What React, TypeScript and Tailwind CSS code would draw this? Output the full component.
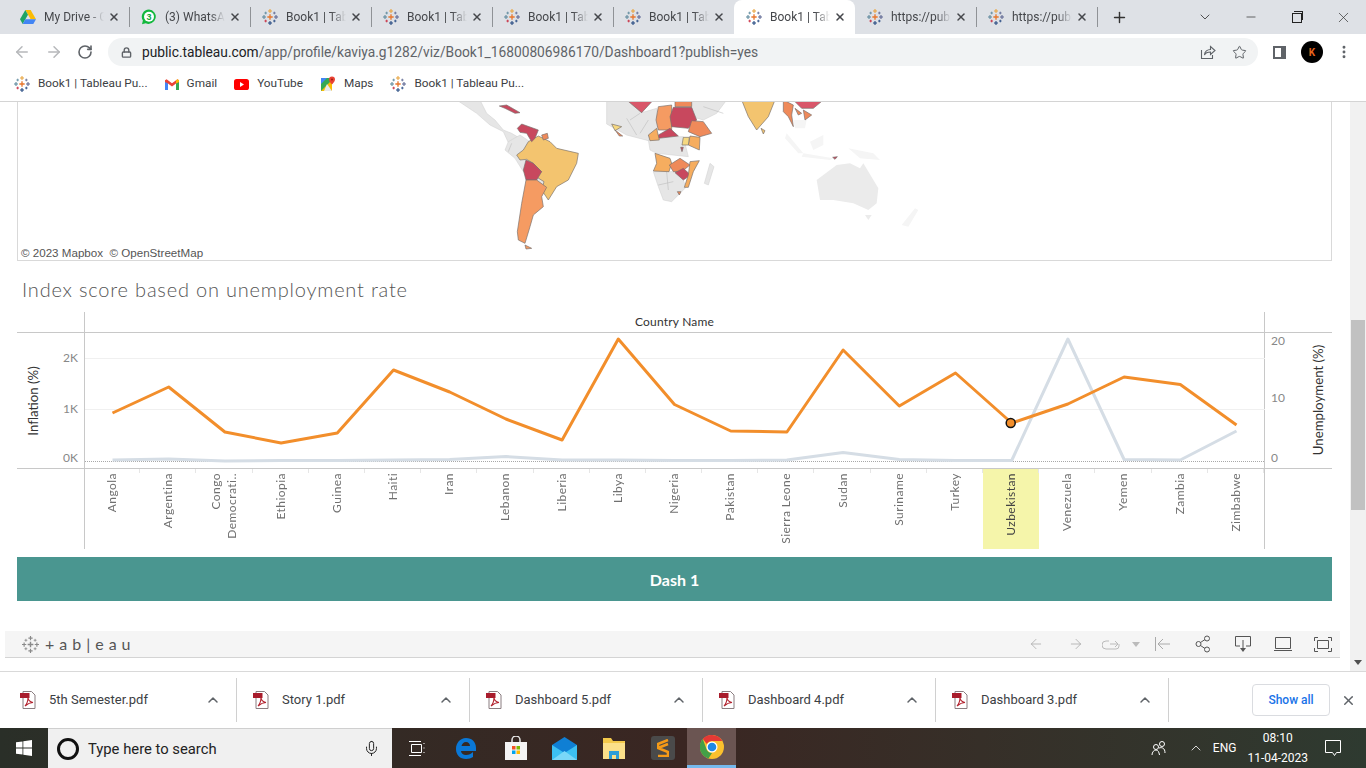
import { ArrowLeft, ArrowRight, ChevronDown, ChevronUp, Lock, Mic, Minus, Plus, RotateCw, Star, X, MoreVertical } from "lucide-react"

const ui = "font-['Roboto','Noto_Sans',sans-serif]"
const viz = "font-['Lato','Open_Sans',sans-serif]"

const tabs = [
  { id: 1, title: "My Drive - Google", icon: "drive" },
  { id: 2, title: "(3) WhatsApp", icon: "whatsapp" },
  { id: 3, title: "Book1 | Tableau", icon: "tableau" },
  { id: 4, title: "Book1 | Tableau", icon: "tableau" },
  { id: 5, title: "Book1 | Tableau", icon: "tableau" },
  { id: 6, title: "Book1 | Tableau", icon: "tableau" },
  { id: 7, title: "Book1 | Tableau", icon: "tableau", active: true },
  { id: 8, title: "https://public", icon: "tableau" },
  { id: 9, title: "https://public", icon: "tableau" },
]

const countries = [
  "Angola", "Argentina", "Congo|Democrati..", "Ethiopia", "Guinea", "Haiti", "Iran", "Lebanon", "Liberia", "Libya", "Nigeria",
  "Pakistan", "Sierra Leone", "Sudan", "Suriname", "Turkey", "Uzbekistan", "Venezuela", "Yemen", "Zambia", "Zimbabwe",
]
const inflationY = [460, 459, 461, 460.5, 460.5, 460, 459.5, 456.5, 460, 460, 460.5, 460.5, 460, 452.5, 459.5, 460.5, 460.5, 339, 459.5, 460, 431]
const unemploymentY = [413, 387, 432, 443, 433, 370, 392, 419, 440, 339, 404.5, 431, 432, 350, 406, 373, 423, 404, 377, 384.5, 425]
const xAt = (i: number) => 112.5 + 56.2 * i
const toPoints = (ys: number[]) => ys.map((y, i) => `${xAt(i)},${y}`).join(" ")

function Cross({ x, y, s, c, w = 1.2 }: { x: number; y: number; s: number; c: string; w?: number }) {
  return <path d={`M${x - s} ${y}H${x + s}M${x} ${y - s}V${y + s}`} stroke={c} strokeWidth={w} fill="none" />
}

function TableauLogo({ mono = false, size = 16 }: { mono?: boolean; size?: number }) {
  const c = (v: string) => (mono ? "#8a8a8a" : v)
  return (
    <svg width={size} height={size} viewBox="0 0 24 24" className="shrink-0">
      <Cross x={12} y={12} s={4} c={c("#e8762c")} w={2} />
      <Cross x={12} y={3} s={3} c={c("#e8a33c")} w={1.6} />
      <Cross x={12} y={21} s={3} c={c("#1f447e")} w={1.6} />
      <Cross x={3} y={12} s={3} c={c("#5b879b")} w={1.6} />
      <Cross x={21} y={12} s={3} c={c("#5b6591")} w={1.6} />
      <Cross x={5.500} y={6} s={2} c={c("#59879b")} />
      <Cross x={18.500} y={6} s={2} c={c("#5b6591")} />
      <Cross x={5.500} y={18} s={2} c={c("#c72035")} />
      <Cross x={18.500} y={18} s={2} c={c("#1f447e")} />
    </svg>
  )
}

function DriveIcon() {
  return (
    <svg width="16" height="14" viewBox="0 0 24 21" className="shrink-0">
      <path d="M8 0h8l8 14h-8z" fill="#fbbc04" />
      <path d="M8 0L0 14l4 7 8-14z" fill="#1fa463" />
      <path d="M4 21l4-7h16l-4 7z" fill="#4285f4" />
    </svg>
  )
}

function WhatsAppIcon() {
  return (
    <svg width="16" height="16" viewBox="0 0 16 16" className="shrink-0">
      <path d="M8 .5a7.200 7.200 0 0 0-6.100 11L1 15.300l3.700-1A7.200 7.200 0 1 0 8 .5z" fill="#12b83c" />
      <circle cx="8" cy="7.800" r="5" fill="#fff" />
      <text x="8" y="11" textAnchor="middle" fontSize="9" fontWeight="700" fill="#12a53a" fontFamily="Liberation Sans">3</text>
    </svg>
  )
}

function GmailIcon() {
  return (
    <svg width="14" height="11" viewBox="0 0 14 11" className="shrink-0">
      <path d="M0 1.200V11h3V4.500l4 3 4-3V11h3V1.200L12.400.3 7 4.300 1.600.3z" fill="#ea4335" />
      <path d="M0 3v8h3V4.500z" fill="#4285f4" />
      <path d="M14 3v8h-3V4.500z" fill="#34a853" />
      <path d="M11 4.500V1.500L12.400.3 14 1.200V3z" fill="#fbbc04" />
    </svg>
  )
}

function YouTubeIcon() {
  return (
    <svg width="15" height="11" viewBox="0 0 15 11" className="shrink-0">
      <rect width="15" height="11" rx="2.600" fill="#f00" />
      <path d="M6 3l4 2.500L6 8z" fill="#fff" />
    </svg>
  )
}

function MapsIcon() {
  return (
    <svg width="16" height="16" viewBox="0 0 16 16" className="shrink-0">
      <path d="M1 2h11v13H1z" fill="#34a853" />
      <path d="M1 15L12 4v11z" fill="#fbbc04" />
      <path d="M1 2h6L1 8z" fill="#4285f4" />
      <path d="M7 8l5 7H4z" fill="#e8eaed" />
      <path d="M12 .5a3 3 0 0 0-3 3c0 2 3 5 3 5s3-3 3-5a3 3 0 0 0-3-3z" fill="#ea4335" />
      <circle cx="12" cy="3.500" r="1" fill="#9d1c12" />
    </svg>
  )
}

function PdfIcon() {
  return (
    <svg width="16" height="18" viewBox="0 0 16 18" className="shrink-0">
      <path d="M3 .5h8.500L15 4v13.500H3z" fill="#fff" stroke="#8a7d80" />
      <path d="M0 2h9.500v5H0z" fill="#a81c2c" />
      <path d="M5 15c2-2 3-6 3-9 0 3 2 5 5 5.500-3 0-5 1-8 3.500z" fill="none" stroke="#b3232f" strokeWidth="1.100" />
    </svg>
  )
}

function ChromeIcon() {
  return (
    <svg width="24" height="24" viewBox="0 0 24 24">
      <circle cx="12" cy="12" r="12" fill="#fbc02d" />
      <path d="M12 0a12 12 0 0 1 10.400 6H12a6 6 0 0 0-5.200 3L2.800 3.900A12 12 0 0 1 12 0z" fill="#e53935" />
      <path d="M2.800 3.900L6.800 15a6 6 0 0 0 5.200 3l-3.500 5.500A12 12 0 0 1 2.800 3.900z" fill="#43a047" />
      <circle cx="12" cy="12" r="5.500" fill="#fff" />
      <circle cx="12" cy="12" r="4.300" fill="#1e88e5" />
    </svg>
  )
}

function TabIcon({ name }: { name: string }) {
  if (name === "drive") return <DriveIcon />
  if (name === "whatsapp") return <WhatsAppIcon />
  return <TableauLogo />
}

function TabStrip() {
  return (
    <div className={`${ui} h-[34px] bg-[#dee1e6] flex pl-2 items-stretch shrink-0`}>
      {tabs.map((tab, i) => {
        const next = tabs[i + 1]
        const hideSep = tab.active || next?.active
        return (
          <div
            key={tab.id}
            className={`relative w-[121px] flex items-center pl-3 gap-2 ${tab.active ? "bg-white rounded-t-lg" : ""}`}
          >
            <TabIcon name={tab.icon} />
            <span className="w-[60px] overflow-hidden whitespace-nowrap text-xs text-[#45474b] [mask-image:linear-gradient(to_right,black_75%,transparent)]">
              {tab.title}
            </span>
            <X size={12} strokeWidth={3} className="text-[#45474b] absolute right-[9px] top-[11px]" />
            {!hideSep && <div className="absolute -right-[1px] top-[7px] h-[20px] w-px bg-[#8f9296]" />}
          </div>
        )
      })}
      <div className="flex items-center pl-[14px]">
        <Plus size={17} strokeWidth={2} className="text-[#333]" />
      </div>
      <div className="ml-auto flex items-center text-[#333]">
        <div className="w-[46px] flex justify-center"><ChevronDown size={16} strokeWidth={1.25} /></div>
        <div className="w-[46px] flex justify-center"><Minus size={14} strokeWidth={1.25} /></div>
        <div className="w-[46px] flex justify-center">
          <div className="relative w-[10px] h-[10px] border border-[#222] bg-[#dee1e6] mt-[2px]">
            <div className="absolute -top-[3px] left-[1px] w-[9px] h-[9px] border-t border-r border-[#222]" />
          </div>
        </div>
        <div className="w-[46px] flex justify-center"><X size={17} strokeWidth={1} /></div>
      </div>
    </div>
  )
}

function AddressBar() {
  return (
    <div className={`${ui} h-[38px] bg-white flex items-center shrink-0 pb-[2px]`}>
      <div className="w-[108px] flex items-center pl-[13px] gap-[14px] shrink-0">
        <ArrowLeft size={18} className="text-[#b6b8bb]" />
        <ArrowRight size={18} className="text-[#b6b8bb]" />
        <RotateCw size={16} strokeWidth={2.4} className="text-[#5f6368]" />
      </div>
      <div className="w-[1150px] h-[28px] rounded-full bg-[#f1f3f4] flex items-center pl-[13px] pr-[11px]">
        <Lock size={11} strokeWidth={3} className="text-[#5f6368]" />
        <div className="ml-[10px] text-[13.75px] whitespace-nowrap text-[#5f6368]">
          <span className="text-[#202124]">public.tableau.com</span>/app/profile/kaviya.g1282/viz/Book1_16800806986170/Dashboard1?publish=yes
        </div>
        <svg width="16" height="16" viewBox="0 0 16 16" fill="none" stroke="#5f6368" strokeWidth="1.100" className="ml-auto">
          <path d="M1.500 6v8.500h11V11" />
          <path d="M4.500 11c0-3.500 3-5.500 6-5.500V2.500l4.500 4-4.500 4V8c-3 0-5 .8-6 3z" />
        </svg>
        <Star size={15} strokeWidth={1.6} className="ml-[16px] text-[#5f6368]" />
      </div>
      <div className="flex items-center flex-1 pl-[15px]">
        <div className="w-[13px] h-[13px] border-2 border-[#5f6368] border-r-[5px]" />
        <div className="ml-[15px] w-[22px] h-[22px] rounded-full bg-black flex items-center justify-center text-[10px] font-bold text-[#e8641c]">K</div>
        <MoreVertical size={16} strokeWidth={2.4} className="ml-[13px] text-[#5f6368]" />
      </div>
    </div>
  )
}

function BookmarksBar() {
  const items = [
    { label: "Book1 | Tableau Pu...", icon: <TableauLogo /> },
    { label: "Gmail", icon: <GmailIcon /> },
    { label: "YouTube", icon: <YouTubeIcon /> },
    { label: "Maps", icon: <MapsIcon /> },
    { label: "Book1 | Tableau Pu...", icon: <TableauLogo /> },
  ]
  return (
    <div className={`${ui} h-[30px] bg-white border-b border-[#d4d4d4] flex items-center pl-[14px] pb-[5px] gap-[17px] shrink-0`}>
      {items.map((item, i) => (
        <div key={i} className="flex items-center gap-[8px] text-[11.8px] text-[#3c4043] whitespace-nowrap">
          {item.icon}
          <span>{item.label}</span>
        </div>
      ))}
    </div>
  )
}

// coordinates are 3x screen pixels, the map is only a rough trace of the shapes
function WorldMap() {
  const land = [
    "50,0 120,0 140,40 165,60 190,90 215,100 235,112 205,128 190,95 150,75 110,40",
    "205,125 240,105 270,125 255,180 282,240 250,215 225,175 195,150",
    "500,0 560,0 605,38 650,25 652,90 625,122 560,105 500,72",
    "750,0 860,0 830,40 790,60 755,50",
    "625,120 670,110 730,110 745,170 650,160 630,150",
    "640,215 720,215 738,262 695,305 670,300 655,260",
    "810,190 822,200 805,255 793,250",
    "285,228 312,245 325,275 305,265",
  ]
  const faint = [
    "1130,240 1190,195 1230,190 1260,205 1270,190 1315,265 1310,310 1285,330 1240,310 1180,300 1140,300",
    "1275,345 1295,345 1285,360",
  ]
  const veryFaint = [
    "1040,100 1090,160 1075,160 1035,115",
    "1110,125 1150,105 1150,135 1120,150",
    "1090,160 1180,175 1170,180 1085,170",
    "1225,145 1300,160 1320,180 1260,175",
    "1385,375 1425,325 1435,330 1405,380",
    "1060,60 1100,60 1095,85 1065,85",
  ]
  const borders = "M560 55L590 105M600 40L570 60M625 60L600 100M680 215L685 270M655 255L700 245M790 20L850 40M215 130L205 155"
  const colored: [string, string][] = [
    ["#f3c46f", "230,165 250,150 265,125 295,108 330,125 350,145 415,160 410,190 385,240 350,260 325,300 305,270 312,245 285,228 305,215 280,190 260,178 240,180"],
    ["#c8485e", "232,85 245,72 295,90 285,115 275,125 260,100 240,97"],
    ["#ef8a5a", "305,105 322,100 325,115 310,120"],
    ["#c8485e", "258,180 280,190 305,215 290,240 258,240 250,210"],
    ["#f59b62", "258,240 290,240 320,262 305,290 310,320 280,345 270,380 255,430 235,420 232,395 245,310"],
    ["#f59b62", "255,435 275,445 258,447"],
    ["#c8485e", "178,18 200,15 240,38 225,40 195,25"],
    ["#d9576a", "560,0 640,0 605,38"],
    ["#f59b62", "655,20 695,15 695,90 655,90 648,60"],
    ["#c8485e", "700,22 755,22 770,60 745,85 695,80 690,50"],
    ["#ef8a5a", "705,0 755,0 755,20 705,20"],
    ["#ef8a5a", "755,62 790,65 815,100 780,110 745,95"],
    ["#f6ad5f", "750,108 780,112 778,150 745,135"],
    ["#f6d880", "730,112 748,112 745,135 726,135"],
    ["#c8485e", "655,105 690,85 715,108 655,115"],
    ["#f6ad5f", "625,105 650,85 658,120 630,122"],
    ["#f6d880", "515,72 545,80 525,92"],
    ["#ef8a5a", "525,90 548,108 538,108"],
    ["#f6ad5f", "645,160 690,175 695,190 687,215 640,213 650,190"],
    ["#ef8a5a", "688,195 720,175 750,195 725,215 700,215"],
    ["#c8485e", "705,218 730,205 752,225 730,240"],
    ["#f6ad5f", "750,185 778,182 760,215 745,262 733,262 745,225"],
    ["#c8485e", "722,142 730,142 726,155"],
    ["#ef8a5a", "712,275 723,275 718,285"],
    ["#f3c46f", "905,0 1005,0 985,50 950,90 925,50"],
    ["#f3c46f", "963,85 975,92 970,102"],
    ["#ef8a5a", "1030,0 1060,15 1055,45 1060,80 1045,50 1030,35"],
    ["#d9576a", "1060,0 1150,0 1120,25 1085,25"],
    ["#ef8a5a", "1065,25 1085,40 1075,45"],
    ["#ef8a5a", "1090,30 1115,45 1095,60"],
    ["#c8485e", "1178,172 1192,170 1185,178"],
  ]
  return (
    <svg width="500" height="158" viewBox="0 6 1500 474" className="ml-[422px] block">
      {land.map((p, i) => <polygon key={i} points={p} fill="#e6e6e6" stroke="#cfcfcf" strokeWidth="1.500" />)}
      <path d={borders} fill="none" stroke="#b5b5b5" strokeWidth="1.500" />
      {faint.map((p, i) => <polygon key={i} points={p} fill="#ebebeb" />)}
      {veryFaint.map((p, i) => <polygon key={i} points={p} fill="#f5f5f5" />)}
      {colored.map(([c, p], i) => <polygon key={i} points={p} fill={c} stroke="#77706c" strokeWidth="2" strokeLinejoin="round" />)}
    </svg>
  )
}

function PlotArea() {
  return (
    <svg width="1180" height="135" viewBox="85 333 1180 135" className="block">
      <path d="M85 358.500H1265M85 409.500H1265" stroke="#f0f0f0" />
      <path d="M85 461.500H1265" stroke="#a8a8a8" strokeDasharray="1 1" />
      <polyline points={toPoints(inflationY)} fill="none" stroke="#d5dde5" strokeWidth="3" strokeLinejoin="round" />
      <polyline points={toPoints(unemploymentY)} fill="none" stroke="#f28e2b" strokeWidth="3" strokeLinejoin="round" />
      <circle cx={xAt(16) - 1} cy={423} r={4.500} fill="#f28e2b" stroke="#111" strokeWidth="1.500" />
    </svg>
  )
}

function Chart() {
  return (
    <div className={`${viz} grid grid-cols-[67px_1181px_67px] grid-rows-[21px_136px_80px]`}>
      <div className="border-b border-[#c8c8c8]" />
      <div className="border-b border-x border-[#c8c8c8] flex items-center justify-center text-xs tracking-[0.2px] text-[#333]">
        Country Name
      </div>
      <div className="border-b border-[#c8c8c8]" />

      <div className="relative border-b border-[#c8c8c8] text-xs text-[#888]">
        <span className="absolute left-[16px] top-[59px] w-0 flex justify-center -rotate-90 whitespace-nowrap text-[13.25px] leading-[18px] text-[#333]">Inflation (%)</span>
        <span className="absolute right-[6px] top-[17px]">2K</span>
        <span className="absolute right-[6px] top-[68px]">1K</span>
        <span className="absolute right-[6px] top-[117px]">0K</span>
      </div>
      <div className="border-x border-b border-[#c8c8c8]"><PlotArea /></div>
      <div className="relative border-b border-[#c8c8c8] text-xs text-[#888]">
        <span className="absolute left-[6px] top-[0px]">20</span>
        <span className="absolute left-[6px] top-[57px]">10</span>
        <span className="absolute left-[6px] top-[117px]">0</span>
        <span className="absolute left-[53px] top-[58px] w-0 flex justify-center -rotate-90 whitespace-nowrap text-[13.25px] leading-[18px] text-[#333]">Unemployment (%)</span>
      </div>

      <div />
      <div className="border-x border-[#c8c8c8]">
        <div className="flex">
          {countries.map((name) => {
            const selected = name === "Uzbekistan"
            const lines = name.split("|")
            return (
              <div
                key={name}
                className={`relative w-[56.2px] h-[80px] shrink-0 flex justify-center items-start pt-[4px] -translate-x-[1px] ${selected ? "bg-[#f5f5aa]" : ""}`}
              >
                {lines.map((line) => (
                  <span
                    key={line}
                    className={`[writing-mode:vertical-rl] rotate-180 text-xs tracking-[0.45px] whitespace-nowrap leading-[16px] ${selected ? "text-[#444]" : "text-[#707070]"}`}
                  >
                    {line}
                  </span>
                ))}
                <div className="absolute right-0 top-0 h-[4px] w-px bg-[#e6e6e6]" />
              </div>
            )
          })}
        </div>
      </div>
      <div />
    </div>
  )
}

function VizToolbar() {
  return (
    <div className="w-[1335px] h-[27px] ml-[5px] mt-[30px] bg-[#f5f5f5] border-b border-[#d4d4d4] flex items-center pl-[17px]">
      <TableauLogo mono size={17} />
      <span className={`${viz} ml-[6px] text-base tracking-[5px] text-[#555] whitespace-nowrap`}>+ab|eau</span>
      <div className="ml-auto flex items-center text-[#aaa]">
        <div className="w-[40px] flex justify-center"><ArrowLeft size={16} strokeWidth={1.2} /></div>
        <div className="w-[40px] flex justify-center"><ArrowRight size={16} strokeWidth={1.2} /></div>
        <div className="w-[30px] flex justify-center">
          <svg width="19" height="13" viewBox="0 0 19 13" fill="none" stroke="#bbb"><path d="M7 3H4a3 3 0 0 0 0 8h10a3 3 0 0 0 3-3V6" /><path d="M8 6h8M13 3l3 3-3 3" /></svg>
        </div>
        <div className="w-[20px] flex justify-center"><div className="border-x-[4px] border-x-transparent border-t-[5px] border-t-[#bbb]" /></div>
        <div className="w-[34px] flex justify-center">
          <svg width="16" height="16" viewBox="0 0 16 16" fill="none" stroke="#aaa"><path d="M.5 1v14M15 8H3M8 3L3 8l5 5" /></svg>
        </div>
        <div className="w-[46px] flex justify-center">
          <svg width="16" height="18" viewBox="0 0 16 18" fill="none" stroke="#555"><circle cx="3.500" cy="9" r="2.500" /><circle cx="12" cy="3.500" r="2.500" /><circle cx="12" cy="14.500" r="2.500" /><path d="M5.500 7.500l4.500-3M5.500 10.500l4.500 3" /></svg>
        </div>
        <div className="w-[34px] flex justify-center">
          <svg width="18" height="18" viewBox="0 0 18 18" fill="none" stroke="#555"><path d="M6 11H1.500V1.500h15V11H12" /><path d="M9 5v10" /><path d="M6 13h6l-3 4z" fill="#555" stroke="none" /></svg>
        </div>
        <div className="w-[46px] flex justify-center">
          <svg width="18" height="14" viewBox="0 0 18 14" fill="none" stroke="#555"><path d="M1.500.5h15v11h-15zM0 13.500h18" /></svg>
        </div>
        <div className="w-[34px] flex justify-center">
          <svg width="18" height="15" viewBox="0 0 18 15" fill="none" stroke="#555"><path d="M.5 4V.5H4M14 .5h3.500V4M17.500 11v3.500H14M4 14.500H.5V11" /><path d="M3.500 3.500h11v8h-11z" /></svg>
        </div>
      </div>
    </div>
  )
}

function Scrollbar() {
  return (
    <div className="w-[16px] bg-[#f1f1f1] flex flex-col items-center shrink-0">
      <div className="h-[218px] w-full" />
      <div className="h-[190px] w-[14px] bg-[#c1c1c1] shrink-0" />
      <div className="mt-auto mb-[6px] border-x-[4px] border-x-transparent border-t-[5px] border-t-[#505050]" />
    </div>
  )
}

function DownloadsBar() {
  const files = ["5th Semester.pdf", "Story 1.pdf", "Dashboard 5.pdf", "Dashboard 4.pdf", "Dashboard 3.pdf"]
  return (
    <div className={`${ui} h-[57px] bg-white border-t border-[#d9d9d9] flex items-center pl-[4px] shrink-0`}>
      {files.map((file) => (
        <div key={file} className="w-[233px] h-[44px] border-r border-[#d0d0d0] flex items-center pl-[16px] pr-[15px] shrink-0">
          <PdfIcon />
          <span className="ml-[13px] text-[13px] text-[#3c4043]">{file}</span>
          <ChevronUp size={16} strokeWidth={2.2} className="ml-auto text-[#5f6368]" />
        </div>
      ))}
      <div className="ml-auto w-[78px] h-[32px] rounded-[4px] border border-[#dadce0] flex items-center justify-center text-xs font-medium text-[#1a73e8]">
        Show all
      </div>
      <div className="w-[36px] flex justify-center">
        <X size={15} strokeWidth={2.4} className="text-[#5f6368]" />
      </div>
    </div>
  )
}

function TaskbarIcons() {
  return (
    <>
      <div className="w-[49px] flex justify-center">
        <svg width="17" height="17" viewBox="0 0 17 17" fill="none" stroke="#fff"><path d="M3.500 4.500h10v8h-10zM1 1.500h12M1 15.500h12M16 3v1M16 7.500v1M16 12v1" /></svg>
      </div>
      <div className="w-[50px] flex justify-center">
        <svg width="20" height="21" viewBox="0 0 20 21"><path d="M10 0C4 0 0 5 0 11c0 6 4 10 10 10 3 0 5-1 7-2v-5c-2 2-4 3-7 3-3 0-5-2-5-4h15v-3C20 4 16 0 10 0zM5.500 8c.5-2 2-4 4.500-4s4 2 4 4z" fill="#0a78d7" /></svg>
      </div>
      <div className="w-[49px] flex justify-center">
        <svg width="24" height="24" viewBox="0 0 24 24">
          <path d="M8 6V4a4 4 0 0 1 8 0v2" fill="none" stroke="#e8e8e8" strokeWidth="1.500" />
          <path d="M1 6h22v18H1z" fill="#f4f4f4" />
          <path d="M8 10h3.500v3.500H8z" fill="#f25022" /><path d="M12.500 10H16v3.500h-3.500z" fill="#7fba00" />
          <path d="M8 14.500h3.500V18H8z" fill="#00a4ef" /><path d="M12.500 14.500H16V18h-3.500z" fill="#ffb900" />
        </svg>
      </div>
      <div className="w-[49px] flex justify-center">
        <svg width="25" height="23" viewBox="0 0 25 23">
          <path d="M12.500 0L25 8v15H0V8z" fill="#0f7fd4" />
          <path d="M0 8l12.500 8L25 8v15H0z" fill="#3cc0f2" />
          <path d="M0 23l12.500-9L25 23z" fill="#7ad7f8" />
        </svg>
      </div>
      <div className="w-[49px] flex justify-center">
        <svg width="22" height="22" viewBox="0 0 22 22">
          <path d="M0 1h8l2 3h12v18H0z" fill="#f3c94b" />
          <path d="M0 6h22v16H0z" fill="#fbe08a" />
          <path d="M6 22v-8h10v8h-3v-4H9v4z" fill="#2f9ed8" />
        </svg>
      </div>
      <div className="w-[49px] flex justify-center">
        <div className="w-[24px] h-[24px] rounded-[3px] bg-[#4a4a4a] flex items-center justify-center">
          <svg width="12" height="18" viewBox="0 0 12 18"><path d="M11 1L1 5v4l10 4v4L1 17M1 9l10-4" fill="none" stroke="#f59a17" strokeWidth="2.600" /></svg>
        </div>
      </div>
      <div className="w-[49px] h-full bg-[#6b5552] border-b-[3px] border-[#76b9ed] flex items-center justify-center">
        <ChromeIcon />
      </div>
    </>
  )
}

function Taskbar() {
  return (
    <div className={`${ui} h-[40px] flex items-center shrink-0 bg-gradient-to-r from-[#2a2f28] via-[#3a2622] to-[#2e3a30]`}>
      <div className="w-[48px] flex justify-center shrink-0">
        <svg width="16" height="16" viewBox="0 0 16 16" fill="#fff"><path d="M0 2.300l6.500-.9v6.200H0zM7.300 1.300L16 0v7.600H7.300zM0 8.400h6.500v6.200L0 13.700zM7.300 8.400H16V16l-8.700-1.300z" /></svg>
      </div>
      <div className="w-[344px] h-full bg-[#f0f0f0] border-t border-[#cfcfcf] flex items-center pl-[9px] pr-[12px] shrink-0">
        <div className="w-[22px] h-[22px] rounded-full border-[3px] border-[#111]" />
        <span className="ml-[9px] text-[14.8px] pt-[1px] text-[#222]">Type here to search</span>
        <Mic size={17} strokeWidth={1.4} className="ml-auto text-[#222]" />
      </div>
      <TaskbarIcons />
      <div className="ml-auto flex items-center text-white h-full">
        <svg width="16" height="16" viewBox="0 0 16 16" fill="none" stroke="#fff" className="mr-[21px]"><circle cx="5" cy="7" r="2.500" /><circle cx="11" cy="4" r="2.500" /><path d="M1 15c0-3 2-5 4-5s3 2 3.500 5M8 8c3-1 6 0 6 5" /></svg>
        <ChevronUp size={16} strokeWidth={1.2} className="mr-[9px]" />
        <span className="text-xs mr-[11px]">ENG</span>
        <div className="flex flex-col items-center text-xs leading-[20px] mr-[17px]">
          <span>08:10</span>
          <span>11-04-2023</span>
        </div>
        <svg width="16" height="16" viewBox="0 0 16 16" fill="none" stroke="#fff" className="mr-[25px]"><path d="M.5.500h15v12h-4l-2 3-2-3h-7z" /></svg>
      </div>
    </div>
  )
}

export default function App() {
  return (
    <div className="w-[1366px] h-[768px] overflow-hidden flex flex-col bg-white">
      <TabStrip />
      <AddressBar />
      <BookmarksBar />
      <div className="flex-1 min-h-0 flex">
        <div className="flex-1 min-w-0 flex flex-col">
          <div className="relative ml-[17px] w-[1315px] h-[159px] shrink-0 border-x border-b border-[#d9d9d9] overflow-hidden">
            <WorldMap />
            <span className="absolute left-[3px] -bottom-[1px] text-[11.6px] text-[#555] whitespace-pre font-['Liberation_Sans',sans-serif]">© 2023 Mapbox  © OpenStreetMap</span>
          </div>
          <div className={`${viz} ml-[22px] h-[51px] pt-[14px] text-xl font-light leading-[28px] text-[#555] tracking-[0.8px] shrink-0`}>
            Index score based on unemployment rate
          </div>
          <div className="ml-[17px] w-[1315px] shrink-0"><Chart /></div>
          <div className={`${viz} ml-[17px] mt-[8px] w-[1315px] h-[44px] pt-[1px] bg-[#4a9690] flex items-center justify-center text-base font-bold text-white shrink-0`}>
            Dash 1
          </div>
          <VizToolbar />
        </div>
        <Scrollbar />
      </div>
      <DownloadsBar />
      <Taskbar />
    </div>
  )
}
